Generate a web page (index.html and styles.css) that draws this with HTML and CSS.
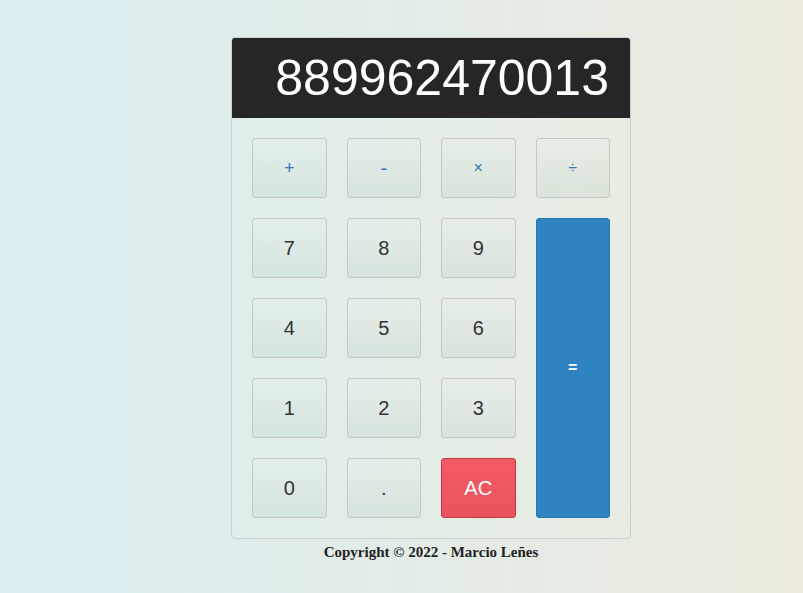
FILE: index.html
```html
<!DOCTYPE html>
<html>
<head>
<meta charset="utf-8">
<link rel="stylesheet" href="styles.css">
</head>
<body>
<div class="page">
  <div class="calc">
    <div class="display">889962470013</div>
    <div class="keys">
      <button class="key op">+</button>
      <button class="key op minus">-</button>
      <button class="key op small">×</button>
      <button class="key op small">÷</button>
      <button class="key">7</button>
      <button class="key">8</button>
      <button class="key">9</button>
      <button class="key equals">=</button>
      <button class="key">4</button>
      <button class="key">5</button>
      <button class="key">6</button>
      <button class="key">1</button>
      <button class="key">2</button>
      <button class="key">3</button>
      <button class="key">0</button>
      <button class="key">.</button>
      <button class="key clear">AC</button>
    </div>
  </div>
  <p class="footer">Copyright © 2022 - Marcio Leñes</p>
</div>
</body>
</html>
```

FILE: styles.css
```css
html, body {
  margin: 0;
  height: 100%;
}
body {
  background: linear-gradient(to right, #d9edf1, #ebeadd);
  font-family: "Liberation Sans", Arial, sans-serif;
}
.page {
  padding: 37px 0 0 231px;
  width: 400px;
}
.calc {
  width: 398px;
  border: 1px solid #c9cfcb;
  border-radius: 4px;
  background: rgba(230, 245, 230, 0.2);
}
.display {
  height: 80px;
  line-height: 80px;
  background: #262626;
  color: #fff;
  font-size: 50px;
  text-align: right;
  padding-right: 21px;
  border-radius: 3px 3px 0 0;
}
.keys {
  display: grid;
  grid-template-columns: repeat(4, 1fr);
  grid-auto-rows: 60px;
  gap: 20px;
  padding: 20px;
}
.key {
  font-family: "Liberation Sans", Arial, sans-serif;
  font-size: 20px;
  color: #333;
  border: 1px solid #c4c8c5;
  border-radius: 3px;
  background: linear-gradient(to bottom, rgba(255,255,255,0.06), rgba(0,60,30,0.05));
  padding: 0;
  margin: 0;
}
.op {
  color: #337ab7;
  font-size: 18px;
}
.op.minus {
  font-size: 20px;
}
.op.small {
  font-size: 16px;
}
.equals {
  grid-column: 4;
  grid-row: 2 / span 4;
  background: #2e84c0;
  border-color: #2b79b2;
  color: #fff;
  font-weight: bold;
  font-size: 16px;
}
.clear {
  background: linear-gradient(to bottom, #f25b63, #e9545c);
  border-color: #c13a40;
  color: #fff;
}
.footer {
  margin: 5px 0 0;
  text-align: center;
  font-family: "Liberation Serif", "Times New Roman", serif;
  font-weight: bold;
  font-size: 15px;
  color: #222;
}
```
